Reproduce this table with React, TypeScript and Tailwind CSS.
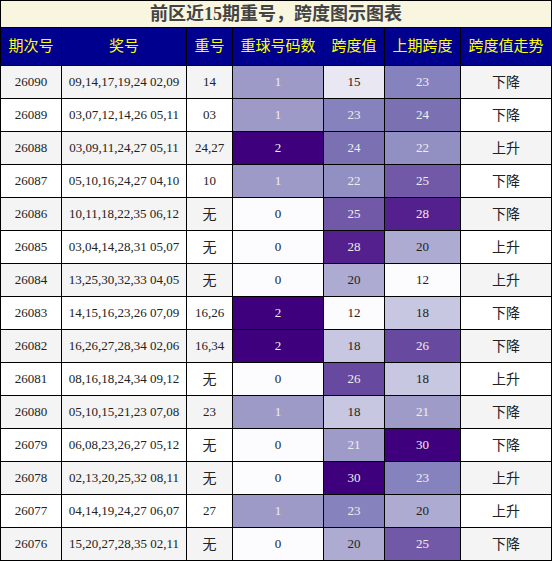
import React from 'react'

type Row = {
  issue: string
  nums: string
  repeat: string
  count: number
  span: number
  prev: number
  trend: string
}

const rows: Row[] = [
  { issue: '26090', nums: '09,14,17,19,24 02,09', repeat: '14', count: 1, span: 15, prev: 23, trend: '下降' },
  { issue: '26089', nums: '03,07,12,14,26 05,11', repeat: '03', count: 1, span: 23, prev: 24, trend: '下降' },
  { issue: '26088', nums: '03,09,11,24,27 05,11', repeat: '24,27', count: 2, span: 24, prev: 22, trend: '上升' },
  { issue: '26087', nums: '05,10,16,24,27 04,10', repeat: '10', count: 1, span: 22, prev: 25, trend: '下降' },
  { issue: '26086', nums: '10,11,18,22,35 06,12', repeat: '无', count: 0, span: 25, prev: 28, trend: '下降' },
  { issue: '26085', nums: '03,04,14,28,31 05,07', repeat: '无', count: 0, span: 28, prev: 20, trend: '上升' },
  { issue: '26084', nums: '13,25,30,32,33 04,05', repeat: '无', count: 0, span: 20, prev: 12, trend: '上升' },
  { issue: '26083', nums: '14,15,16,23,26 07,09', repeat: '16,26', count: 2, span: 12, prev: 18, trend: '下降' },
  { issue: '26082', nums: '16,26,27,28,34 02,06', repeat: '16,34', count: 2, span: 18, prev: 26, trend: '下降' },
  { issue: '26081', nums: '08,16,18,24,34 09,12', repeat: '无', count: 0, span: 26, prev: 18, trend: '上升' },
  { issue: '26080', nums: '05,10,15,21,23 07,08', repeat: '23', count: 1, span: 18, prev: 21, trend: '下降' },
  { issue: '26079', nums: '06,08,23,26,27 05,12', repeat: '无', count: 0, span: 21, prev: 30, trend: '下降' },
  { issue: '26078', nums: '02,13,20,25,32 08,11', repeat: '无', count: 0, span: 30, prev: 23, trend: '上升' },
  { issue: '26077', nums: '04,14,19,24,27 06,07', repeat: '27', count: 1, span: 23, prev: 20, trend: '上升' },
  { issue: '26076', nums: '15,20,27,28,35 02,11', repeat: '无', count: 0, span: 20, prev: 25, trend: '下降' },
]

// purple scale for 跨度 columns
const spanBg: Record<number, string> = {
  12: 'bg-[#fcfbfd] text-[#222]',
  15: 'bg-[#e9e7f2] text-[#222]',
  18: 'bg-[#c7c7e2] text-[#222]',
  20: 'bg-[#adabd2] text-[#222]',
  21: 'bg-[#9e9bc9] text-[#eeeeee]',
  22: 'bg-[#928fc3] text-[#eeeeee]',
  23: 'bg-[#8582bd] text-[#eeeeee]',
  24: 'bg-[#7b70b1] text-[#eeeeee]',
  25: 'bg-[#7259a7] text-[#eeeeee]',
  26: 'bg-[#674aa0] text-[#eeeeee]',
  28: 'bg-[#54208e] text-[#eeeeee]',
  30: 'bg-[#3f007d] text-[#eeeeee]',
}

const countBg: Record<number, string> = {
  0: 'bg-[#fcfbfd] text-[#222]',
  1: 'bg-[#9e9ac8] text-[#eeeeee]',
  2: 'bg-[#3f007d] text-[#eeeeee]',
}

const headers = ['期次号', '奖号', '重号', '重球号码数', '跨度值', '上期跨度', '跨度值走势']

export default function App() {
  return (
    <div
      className="w-[552px] h-[561px] bg-black p-px grid grid-cols-[60px_124px_45px_90px_60px_75px_90px] grid-rows-[26px_37px_repeat(15,32px)] gap-px"
      style={{ fontFamily: '"Liberation Serif", "Noto Sans CJK SC", serif' }}
    >
      {/* title */}
      <div className="col-span-7 bg-[#f8f6df] flex items-center justify-center text-[18px] font-bold text-[#444]">
        前区近15期重号，跨度图示图表
      </div>

      {/* header */}
      {headers.map(h => (
        <div key={h} className="bg-[#00008f] text-[#ffff00] text-[15px] flex items-center justify-center">
          {h}
        </div>
      ))}

      {/* body */}
      {rows.map((r, i) => {
        const base = i % 2 === 0 ? 'bg-[#f4f4f4]' : 'bg-white'
        return (
          <React.Fragment key={r.issue}>
            <div className={`${base} text-[13px] text-[#222] flex items-center justify-center`}>{r.issue}</div>
            <div className={`${base} text-[13px] text-[#222] flex items-center justify-center`}>{r.nums}</div>
            <div className={`${base} ${r.repeat === '无' ? 'text-[14px]' : 'text-[13px]'} text-[#222] flex items-center justify-center`}>
              {r.repeat}
            </div>
            <div className={`${countBg[r.count]} text-[13px] flex items-center justify-center`}>{r.count}</div>
            <div className={`${spanBg[r.span]} text-[13px] flex items-center justify-center`}>{r.span}</div>
            <div className={`${spanBg[r.prev]} text-[13px] flex items-center justify-center`}>{r.prev}</div>
            <div className={`${base} text-[14px] text-[#222] flex items-center justify-center`}>{r.trend}</div>
          </React.Fragment>
        )
      })}
    </div>
  )
}
